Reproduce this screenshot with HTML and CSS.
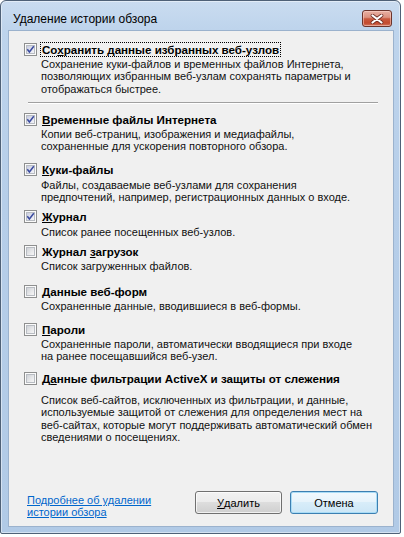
FILE: index.html
```html
<!DOCTYPE html>
<html lang="ru">
<head>
<meta charset="utf-8">
<title>Удаление истории обзора</title>
<link rel="stylesheet" href="styles.css">
</head>
<body>
<div class="window">
  <div class="titlebar">
    <span class="title">Удаление истории обзора</span>
    <span class="close">
      <svg width="14" height="10" viewBox="0 0 14 10">
        <path d="M2.5 1.5 L11.5 8.5 M11.5 1.5 L2.5 8.5" stroke="#6a2a22" stroke-width="3.6" stroke-linecap="round" fill="none"/>
        <path d="M2.5 1.5 L11.5 8.5 M11.5 1.5 L2.5 8.5" stroke="#ffffff" stroke-width="2.2" stroke-linecap="round" fill="none"/>
      </svg>
    </span>
  </div>
  <div class="client">
    <div class="item first">
      <div class="head">
        <span class="cb checked"><span class="cb-in"></span><svg class="mark" width="13" height="13" viewBox="0 0 13 13"><path d="M3.3 6.3 L5.4 9 L9.8 3.2" stroke="#3a4a9e" stroke-width="1.5" fill="none"/></svg></span>
        <span class="label focus">Со<u>х</u>ранить данные избранных веб-узлов</span>
      </div>
      <div class="desc">Сохранение куки-файлов и временных файлов Интернета,<br>позволяющих избранным веб-узлам сохранять параметры и<br>отображаться быстрее.</div>
    </div>
    <div class="sep"></div>
    <div class="item">
      <div class="head">
        <span class="cb checked"><span class="cb-in"></span><svg class="mark" width="13" height="13" viewBox="0 0 13 13"><path d="M3.3 6.3 L5.4 9 L9.8 3.2" stroke="#3a4a9e" stroke-width="1.5" fill="none"/></svg></span>
        <span class="label"><u>В</u>ременные файлы Интернета</span>
      </div>
      <div class="desc">Копии веб-страниц, изображения и медиафайлы,<br>сохраненные для ускорения повторного обзора.</div>
    </div>
    <div class="item g10">
      <div class="head">
        <span class="cb checked"><span class="cb-in"></span><svg class="mark" width="13" height="13" viewBox="0 0 13 13"><path d="M3.3 6.3 L5.4 9 L9.8 3.2" stroke="#3a4a9e" stroke-width="1.5" fill="none"/></svg></span>
        <span class="label"><u>К</u>уки-файлы</span>
      </div>
      <div class="desc">Файлы, создаваемые веб-узлами для сохранения<br>предпочтений, например, регистрационных данных о входе.</div>
    </div>
    <div class="item g6">
      <div class="head">
        <span class="cb checked"><span class="cb-in"></span><svg class="mark" width="13" height="13" viewBox="0 0 13 13"><path d="M3.3 6.3 L5.4 9 L9.8 3.2" stroke="#3a4a9e" stroke-width="1.5" fill="none"/></svg></span>
        <span class="label"><u>Ж</u>урнал</span>
      </div>
      <div class="desc">Список ранее посещенных веб-узлов.</div>
    </div>
    <div class="item g6">
      <div class="head">
        <span class="cb"><span class="cb-in"></span></span>
        <span class="label">Журнал <u>з</u>агрузок</span>
      </div>
      <div class="desc">Список загруженных файлов.</div>
    </div>
    <div class="item g12">
      <div class="head">
        <span class="cb"><span class="cb-in"></span></span>
        <span class="label"><u>Д</u>анные веб-форм</span>
      </div>
      <div class="desc">Сохраненные данные, вводившиеся в веб-формы.</div>
    </div>
    <div class="item g9">
      <div class="head">
        <span class="cb"><span class="cb-in"></span></span>
        <span class="label"><u>П</u>ароли</span>
      </div>
      <div class="desc">Сохраненные пароли, автоматически вводящиеся при входе<br>на ранее посещавшийся веб-узел.</div>
    </div>
    <div class="item g8">
      <div class="head">
        <span class="cb"><span class="cb-in"></span></span>
        <span class="label">Д<u>а</u>нные фильтрации ActiveX и защиты от слежения</span>
      </div>
      <div class="desc wide">Список веб-сайтов, исключенных из фильтрации, и данные,<br>используемые защитой от слежения для определения мест на<br>веб-сайтах, которые могут поддерживать автоматический обмен<br>сведениями о посещениях.</div>
    </div>
    <div class="footer">
      <a class="link" href="#">Подробнее об удалении<br>истории обзора</a>
      <div class="buttons">
        <span class="btn"><u>У</u>далить</span>
        <span class="btn default">Отмена</span>
      </div>
    </div>
  </div>
</div>
</body>
</html>
```
FILE: styles.css
```css
html, body {
  margin: 0;
  padding: 0;
  background: #ffffff;
}
body {
  font-family: "Liberation Sans", Arial, sans-serif;
  color: #000;
}
.window {
  width: 401px;
  height: 534px;
  box-sizing: border-box;
  border: 1px solid #4f6177;
  border-radius: 6px 6px 2px 2px;
  background: linear-gradient(180deg, #cadcf0 0px, #bed4ec 28px, #b6cee9 200px, #b1cae6 100%);
  box-shadow: inset 0 0 0 1px rgba(255,255,255,0.45);
  padding: 0 6px 6px 7px;
  display: flex;
  flex-direction: column;
}
.titlebar {
  height: 29px;
  box-sizing: border-box;
  padding: 6px 2px 0 5px;
  display: flex;
  align-items: center;
}
.title {
  font-size: 12px;
  color: #000;
  flex: 1;
}
.close {
  width: 30px;
  height: 17px;
  box-sizing: border-box;
  border: 1px solid #6b342c;
  border-radius: 3px;
  background: linear-gradient(180deg, #e8b0a3 0%, #dc9280 42%, #c95a3f 52%, #c34a2e 80%, #cf7660 100%);
  box-shadow: inset 0 0 0 1px rgba(255,220,210,0.5);
  display: flex;
  align-items: center;
  justify-content: center;
}
.client {
  flex: 1;
  background: #f0f0f0;
  border: 1px solid #9bb2cd;
  padding: 11px 15px 8px 15px;
  display: flex;
  flex-direction: column;
  font-size: 11px;
}
.item.g10 { margin-top: 10px; }
.item.g6 { margin-top: 6.3px; }
.item.g12 { margin-top: 11.8px; }
.item.g9 { margin-top: 9.4px; }
.item.g8 { margin-top: 8.3px; }
.head {
  display: flex;
  align-items: center;
  height: 14px;
}
.cb {
  position: relative;
  width: 13px;
  height: 13px;
  box-sizing: border-box;
  border: 1px solid #8e8f8f;
  background: #fbfbfb;
  padding: 1px;
  margin-right: 3px;
  flex: none;
}
.cb-in {
  display: block;
  width: 100%;
  height: 100%;
  box-sizing: border-box;
  border: 1px solid #b8bcc2;
  background: linear-gradient(135deg, #cfd2d7 0%, #e6e7e9 55%, #f6f6f6 100%);
}
.cb.checked .cb-in {
  background: linear-gradient(135deg, #c9cde0 0%, #e2e4ef 55%, #f4f4f8 100%);
}
.cb .mark {
  position: absolute;
  left: -1px;
  top: -1px;
}
.label {
  font-weight: bold;
  font-size: 11.6px;
  line-height: 13px;
  padding: 0 1px;
  border: 1px solid transparent;
}
.label.focus {
  border: 1px dotted #000;
}
.desc {
  padding-left: 17px;
  margin-top: 1.75px;
  line-height: 12.5px;
  font-size: 11px;
  color: #111;
}
.desc.wide {
  margin-top: 8.5px;
}
.sep {
  margin: 6.5px 0 8.3px 4px;
  height: 0;
  border-top: 1px solid #a0a0a0;
  border-bottom: 1px solid #ffffff;
}
.footer {
  margin-top: auto;
  display: flex;
  align-items: flex-end;
}
.link {
  margin-left: 3px;
  color: #0066cc;
  font-size: 11px;
  line-height: 12px;
  text-decoration: underline;
}
.buttons {
  margin-left: auto;
  margin-bottom: 4px;
  display: flex;
  gap: 8px;
}
.btn {
  width: 87px;
  height: 23px;
  box-sizing: border-box;
  border: 1px solid #707070;
  border-radius: 3px;
  background: linear-gradient(180deg, #f2f2f2 0%, #ebebeb 49%, #dddddd 50%, #cfcfcf 100%);
  box-shadow: inset 0 0 0 1px rgba(255,255,255,0.7);
  display: flex;
  align-items: center;
  justify-content: center;
  font-size: 11px;
  color: #000;
}
.btn.default {
  width: 88px;
  border-color: #3c7fb1;
  background: linear-gradient(180deg, #f2f9fd 0%, #e6f3fb 49%, #d8edf9 50%, #cce6f6 100%);
  box-shadow: inset 0 0 0 1px #a9dcf6;
}
```
